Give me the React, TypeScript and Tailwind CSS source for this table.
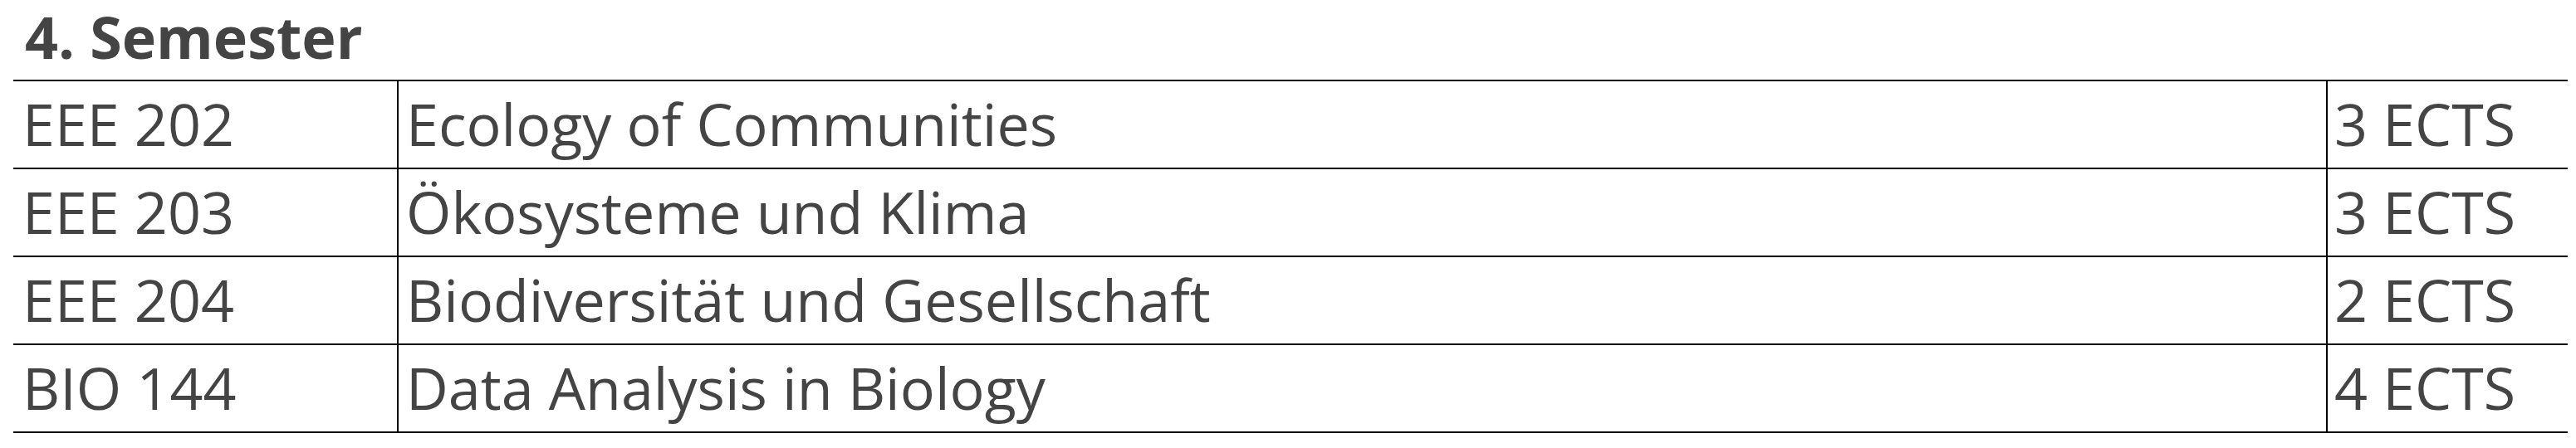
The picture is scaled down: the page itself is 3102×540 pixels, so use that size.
import React from "react";

const rows = [
  ["EEE 202", "Ecology of Communities", "3 ECTS"],
  ["EEE 203", "Ökosysteme und Klima", "3 ECTS"],
  ["EEE 204", "Biodiversität und Gesellschaft", "2 ECTS"],
  ["BIO 144", "Data Analysis in Biology", "4 ECTS"],
];

export default function App() {
  return (
    <div
      className="w-[3102px] h-[540px] bg-white text-[#444444]"
      style={{ fontFamily: '"Open Sans", "Noto Sans", sans-serif' }}
    >
      <h2 className="pl-[30px] text-[70px] font-bold leading-[88px] mb-[8px] whitespace-nowrap">
        4. Semester
      </h2>
      <div className="ml-[16px] w-[3076px] border-b-2 border-black">
        {rows.map((r) => (
          <div
            key={r[0]}
            className="grid grid-cols-[462px_2323px_291px] border-t-2 border-black h-[106px] text-[70px] leading-[102px] whitespace-nowrap"
          >
            <div className="pl-[11px]">{r[0]}</div>
            <div className="pl-[9px] border-l-2 border-black">{r[1]}</div>
            <div className="pl-[8px] border-l-2 border-black">{r[2]}</div>
          </div>
        ))}
      </div>
    </div>
  );
}
